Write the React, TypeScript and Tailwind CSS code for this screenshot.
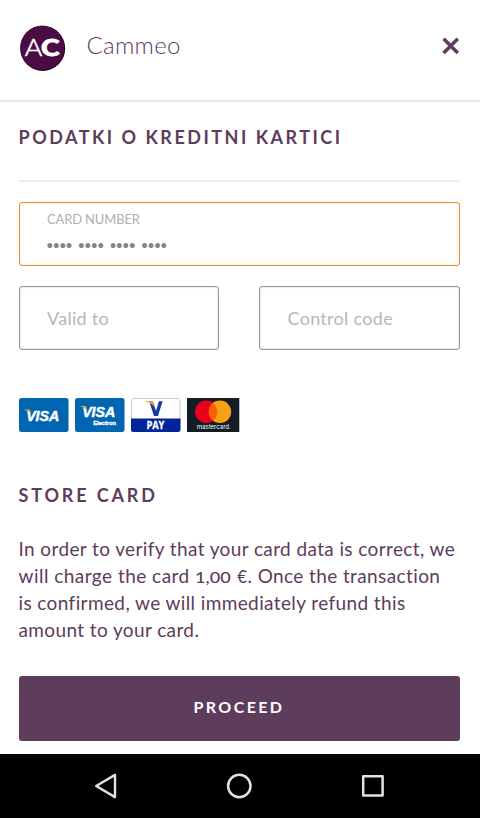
import type { ReactNode } from 'react';

function Logo() {
    return (
        <svg width="46" height="46" viewBox="0 0 46 46" className="mt-[25px] ml-[20px] shrink-0">
            <circle cx="22.7" cy="23.4" r="22.5" fill="#2b0226" />
            <circle cx="22.3" cy="22.6" r="22" fill="#4a0c42" />
            <text x="4.8" y="31.2" fontSize="23.5" fontWeight="300" textLength="17.5" lengthAdjust="spacingAndGlyphs" fill="#fff" stroke="#fff" strokeWidth="0.5" fontFamily="Lato, sans-serif">A</text>
            <text x="21" y="31.2" fontSize="23.5" fontWeight="900" textLength="18.6" lengthAdjust="spacingAndGlyphs" fill="#fff" stroke="#fff" strokeWidth="0.8" fontFamily="Lato, sans-serif">C</text>
        </svg>
    );
}

function Header() {
    return (
        <header className="flex h-[101.5px] border-b-2 border-[#e9e9e9]">
            <Logo />
            <h1 className="mt-[28px] ml-[20.5px] text-[24px] leading-[34px] font-light tracking-[0.3px]">Cammeo</h1>
            <svg width="18" height="18" viewBox="0 0 18 18" className="mt-[37px] mr-[20px] ml-auto">
                <path d="M1.6 1.7 15.8 15.9M15.8 1.7 1.6 15.9" stroke="#5e3c5b" strokeWidth="3.5" fill="none" />
            </svg>
        </header>
    );
}

function Field({ label }: { label: string }) {
    return (
        <div className="flex h-[64px] items-center rounded-[3px] border border-[#999] pl-[27.5px] text-[18px] tracking-[0.3px] text-[#b7b7b7] shadow-[inset_0_0_2px_rgba(0,0,0,0.25)]">
            <span>{label}</span>
        </div>
    );
}

function VisaWord({ y, width, x }: { y: number; width: number; x: number }) {
    return (
        <>
            <text x={x} y={y} fontSize="15.5" fontWeight="700" fontStyle="italic" textLength={width} lengthAdjust="spacingAndGlyphs" fill="#fff" stroke="#fff" strokeWidth="0.5" fontFamily="Liberation Sans, sans-serif">VISA</text>
            <path d={`M${x - 1.8} ${y - 11.3}h5.4l1.5 5c-1.6-2.4-3.6-3.8-6.9-4.4z`} fill="#f5a12c" />
        </>
    );
}

function CardLogo({ width, children }: { width: number; children: ReactNode }) {
    return (
        <svg width={width} height="34" viewBox={`0 0 ${width} 34`}>
            {children}
        </svg>
    );
}

function CardLogos() {
    return (
        <div className="mt-[48px] flex gap-[6px]">
            <CardLogo width={50}>
                <rect width="49.5" height="34" rx="2.5" fill="#0066b2" />
                <VisaWord x={7.2} y={22.8} width={33} />
            </CardLogo>
            <CardLogo width={50}>
                <rect width="49.5" height="34" rx="2.5" fill="#0066b2" />
                <VisaWord x={7.2} y={19.3} width={33} />
                <text x="18.2" y="26.8" fontSize="5.6" fontWeight="700" textLength="22.8" lengthAdjust="spacingAndGlyphs" fill="#fff" stroke="#fff" strokeWidth="0.3" fontFamily="Liberation Sans, sans-serif">Electron</text>
            </CardLogo>
            <CardLogo width={50}>
                <rect x="0.5" y="0.5" width="48.5" height="33" rx="2.5" fill="#fff" stroke="#c3cbe4" />
                <path d="M0 20.5h49.5v11a2.5 2.5 0 0 1-2.5 2.5h-44.5a2.5 2.5 0 0 1-2.5-2.5z" fill="#00249c" />
                <path d="M18.3 3.3h3.6l3.1 9.8 2.9-9.8h3.7l-4.6 14.6h-4.1z" fill="#123a9c" />
                <path d="M14.6 3.3h7.3l1.8 6.4c-1.8-3.4-4.4-5.2-9.1-6z" fill="#f5a12c" />
                <text x="15.4" y="31" fontSize="10.3" fontWeight="700" textLength="18" lengthAdjust="spacingAndGlyphs" fill="#fff" stroke="#fff" strokeWidth="0.3" fontFamily="Open Sans, sans-serif">PAY</text>
            </CardLogo>
            <CardLogo width={53}>
                <rect width="52.3" height="34" fill="#141c26" />
                <circle cx="19.2" cy="13.8" r="11.2" fill="#eb001b" />
                <circle cx="33" cy="13.8" r="11.2" fill="#f9a01b" />
                <path d="M26.1 5a11.2 11.2 0 0 1 0 17.6 11.2 11.2 0 0 1 0-17.6z" fill="#ff5f00" />
                <text x="9.8" y="30.6" fontSize="6.4" textLength="34" lengthAdjust="spacingAndGlyphs" fill="#fff" fontFamily="Inter, sans-serif">mastercard.</text>
            </CardLogo>
        </div>
    );
}

function NavBar() {
    return (
        <nav className="mt-auto flex h-[64px] items-center justify-between bg-black pr-[95px] pl-[94px]">
            <svg width="24" height="28" viewBox="0 0 24 28" fill="none" stroke="#e2e2e2" strokeWidth="2.4" strokeLinejoin="round">
                <path d="M2.2 14 21 2.9v22.2z" />
            </svg>
            <svg width="28" height="28" viewBox="0 0 28 28" fill="none" stroke="#e2e2e2" strokeWidth="2.5">
                <circle cx="13.3" cy="14" r="11.2" />
            </svg>
            <svg width="24" height="24" viewBox="0 0 24 24" fill="none" stroke="#e2e2e2" strokeWidth="2.5" strokeLinejoin="round">
                <rect x="2.2" y="2.2" width="19.4" height="19.4" />
            </svg>
        </nav>
    );
}

export default function App() {
    return (
        <div className="flex h-[818px] w-[480px] flex-col overflow-hidden bg-white font-['Lato',sans-serif] text-[#5e3c5b]">
            <Header />
            <main className="flex flex-col pr-[20.5px] pl-[18.5px]">
                <h2 className="mt-[23.5px] text-[18px] leading-[24px] font-bold tracking-[2.5px] whitespace-nowrap">PODATKI O KREDITNI KARTICI</h2>
                <div className="mt-[31px] h-[2px] bg-[#ececec]" />

                <div className="mt-[20px] h-[64px] rounded-[3px] border border-[#f08c2e] pt-[7px] pl-[27.5px] shadow-[inset_0_0_1px_rgba(240,140,46,0.7)]">
                    <div className="text-[13px] leading-[18px] tracking-[-0.15px] text-[#b0b0b0]">CARD NUMBER</div>
                    <div className="mt-[5px] -ml-[1px] text-[13px] leading-[24px] tracking-[-1.1px] [word-spacing:3.6px] whitespace-nowrap text-[#858585]">•••• •••• •••• ••••</div>
                </div>

                <div className="mt-[20px] grid grid-cols-2 gap-[40px]">
                    <Field label="Valid to" />
                    <Field label="Control code" />
                </div>

                <CardLogos />

                <h2 className="mt-[51px] text-[18px] leading-[24px] font-bold tracking-[2.85px]">STORE CARD</h2>
                <p className="mt-[28px] mb-[1px] text-[19px] leading-[27px] tracking-[0.39px] whitespace-nowrap">
                    In order to verify that your card data is correct, we
                    <br />
                    <span className="tracking-[0.47px]">will charge the card </span>
                    {/* old-style figures sit at x-height */}
                    <span className="inline-block w-[37px] origin-left scale-x-[1.25] text-[14.5px] leading-none font-medium tracking-normal">1,00</span>{' '}
                    <span className="text-[17px] leading-none">€</span>. Once the transaction
                    <br />
                    is confirmed, we will immediately refund this
                    <br />
                    amount to your card.
                </p>

                <button className="mt-[32px] h-[65px] rounded-[3px] bg-[#5e3c5b] pb-[3px] text-[16px] font-bold tracking-[2.4px] text-white">PROCEED</button>
            </main>
            <NavBar />
        </div>
    );
}
